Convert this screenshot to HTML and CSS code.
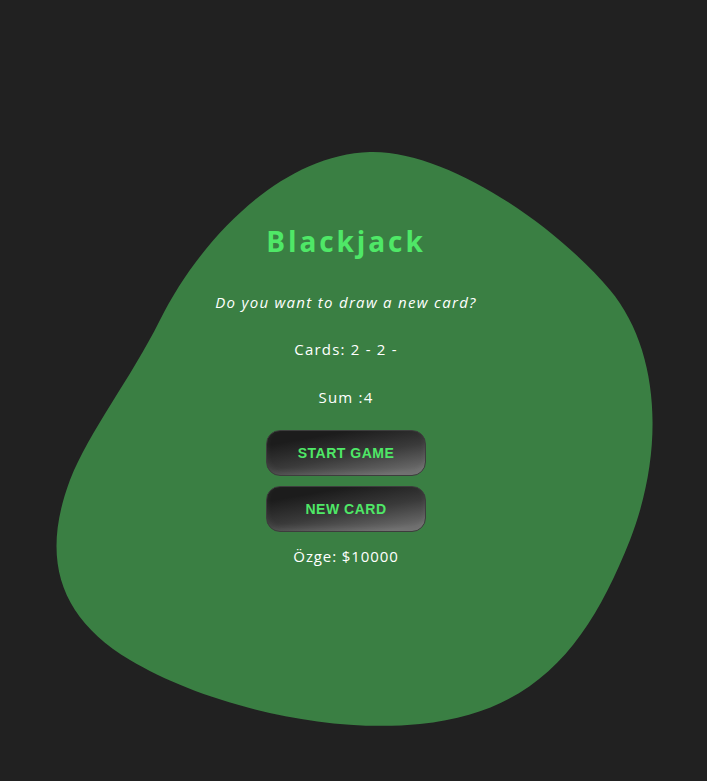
FILE: index.html
```html
<!DOCTYPE html>
<html lang="en">
<head>
<meta charset="utf-8">
<title>Blackjack</title>
<link rel="stylesheet" href="styles.css">
</head>
<body>
<div class="table">
  <svg class="blob" width="707" height="781" viewBox="0 0 707 781" aria-hidden="true">
    <path d="M370,152 C450,150 560,230 610,290 C660,350 665,450 630,540 C590,640 540,712 420,724 C320,734 200,702 130,660 C60,618 40,560 70,480 C90,430 130,380 160,320 C200,240 280,155 370,152 Z" fill="#3a7f43"/>
  </svg>
  <main class="game">
    <h1 class="title">Blackjack</h1>
    <p class="message">Do you want to draw a new card?</p>
    <p class="info">Cards: 2 - 2 -</p>
    <p class="info">Sum :4</p>
    <button class="btn">START GAME</button>
    <button class="btn">NEW CARD</button>
    <p class="player">Özge: $10000</p>
  </main>
</div>
</body>
</html>
```
FILE: styles.css
```css
html, body {
  margin: 0;
  padding: 0;
  background: #212121;
}
.table {
  position: relative;
  width: 707px;
  height: 781px;
  overflow: hidden;
}
.blob {
  position: absolute;
  left: 0;
  top: 0;
}
.game {
  position: relative;
  width: 692px;
  padding-top: 222px;
  display: flex;
  flex-direction: column;
  align-items: center;
  font-family: "Open Sans", "DejaVu Sans", sans-serif;
  color: #ffffff;
}
.title {
  margin: 0;
  font-size: 28px;
  line-height: 38px;
  font-weight: 700;
  letter-spacing: 2.9px;
  color: #4fe867;
}
.message {
  margin: 32px 0 0;
  font-style: italic;
  font-size: 15px;
  line-height: 20px;
  letter-spacing: 1.3px;
}
.info {
  margin: 27px 0 0;
  font-size: 15px;
  line-height: 20px;
  letter-spacing: 1.2px;
}
.info + .info {
  margin-top: 28px;
}
.btn {
  width: 160px;
  height: 46px;
  margin-top: 10px;
  border: 1px solid #3d3d3d;
  border-radius: 14px;
  background: linear-gradient(170deg, #1c1c1c 20%, #3a3a3a 55%, #6a6a6a 90%);
  box-shadow: inset 0 -3px 6px rgba(255,255,255,0.08);
  color: #4fe867;
  font-family: "Liberation Sans", Arial, sans-serif;
  font-weight: 700;
  font-size: 14px;
  letter-spacing: 0.5px;
  cursor: pointer;
}
.info + .btn {
  margin-top: 23px;
}
.player {
  margin: 14px 0 0;
  font-size: 15px;
  line-height: 20px;
  letter-spacing: 0.9px;
}
```
